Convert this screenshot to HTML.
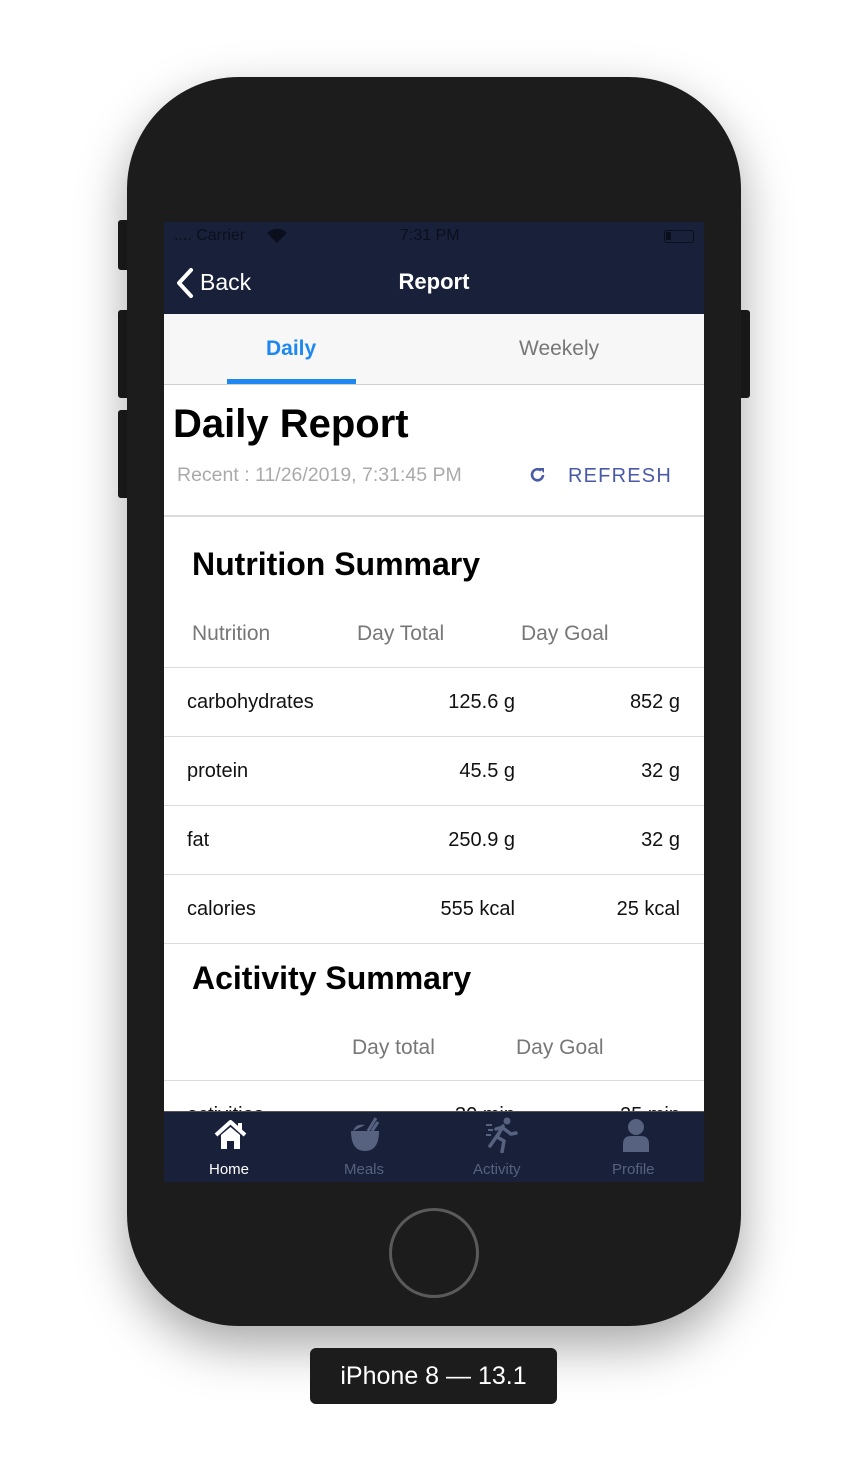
<!DOCTYPE html>
<html><head><meta charset="utf-8"><style>
*{margin:0;padding:0;box-sizing:border-box}
body{width:868px;height:1476px;background:#fff;position:relative;font-family:"Liberation Sans",sans-serif;overflow:hidden}
.a{position:absolute;white-space:nowrap}
.phone{position:absolute;left:127px;top:77px;width:614px;height:1249px;background:#1c1c1c;border-radius:112px;box-shadow:0 20px 50px rgba(0,0,0,.35)}
.btn{position:absolute;background:#1c1c1c;border-radius:3px}
.screen{position:absolute;left:164px;top:222px;width:540px;height:960px;background:#fff;overflow:hidden}
.line{position:absolute;left:0;width:540px;height:1px;background:#dcdcdc}
.row{font-size:20px;color:#111}
.hdr{font-size:21px;color:#777}
.lbl{font-size:15px;color:#56627f}
</style></head><body>
<div class="btn" style="left:118px;top:220px;width:12px;height:50px"></div>
<div class="btn" style="left:118px;top:310px;width:12px;height:88px"></div>
<div class="btn" style="left:118px;top:410px;width:12px;height:88px"></div>
<div class="btn" style="left:738px;top:310px;width:12px;height:88px"></div>
<div class="phone"></div>
<div class="a" style="left:389px;top:1208px;width:90px;height:90px;border-radius:50%;border:3px solid #5a5a5a"></div>
<div class="a" style="left:310px;top:1348px;width:247px;height:56px;background:#1c1c1c;border-radius:6px;color:#fff;font-size:25px;text-align:center;line-height:56px">iPhone 8 — 13.1</div>
<div class="screen">
 <div class="a" style="left:0;top:0;width:540px;height:92px;background:#19203a"></div>
 <div class="a" style="left:10px;top:5px;font-size:16px;color:#0b0f1d">.... Carrier</div>
 <svg class="a" style="left:102px;top:6px" width="22" height="16" viewBox="0 0 22 16"><path d="M11 15 L1 5 A14 14 0 0 1 21 5 Z" fill="#0b0f1d"/></svg>
 <div class="a" style="left:236px;top:5px;font-size:16px;color:#0b0f1d">7:31 PM</div>
 <div class="a" style="left:500px;top:8px;width:30px;height:13px;border:1.5px solid #0b0f1d;border-radius:3px"><div style="width:5px;height:8px;margin:1px;background:#0b0f1d"></div></div>
 <svg class="a" style="left:11px;top:45px" width="20" height="32" viewBox="0 0 20 32"><path d="M16 3 L4 16 L16 29" stroke="#fff" stroke-width="4" fill="none" stroke-linecap="round" stroke-linejoin="round"/></svg>
 <div class="a" style="left:36px;top:47px;font-size:23px;color:#fff">Back</div>
 <div class="a" style="left:0;width:540px;text-align:center;top:47px;font-size:22px;color:#fff;font-weight:bold">Report</div>
 <div class="a" style="left:0;top:92px;width:540px;height:71px;background:#f7f7f7;border-bottom:1px solid #cfcfcf"></div>
 <div class="a" style="left:102px;top:115px;font-size:21px;color:#1e88f0;font-weight:bold">Daily</div>
 <div class="a" style="left:355px;top:115px;font-size:21px;color:#777">Weekely</div>
 <div class="a" style="left:63px;top:157px;width:129px;height:5px;background:#1e88f0"></div>
 <div class="a" style="left:9px;top:180px;font-size:40px;font-weight:bold;color:#000">Daily Report</div>
 <div class="a" style="left:13px;top:242px;font-size:19.5px;color:#aaa">Recent : 11/26/2019, 7:31:45 PM</div>
 <svg class="a" style="left:365px;top:244px" width="18" height="18" viewBox="0 0 18 18"><path d="M14 9 A5.5 5.5 0 1 1 12 4.5" stroke="#4a5aa8" stroke-width="2.6" fill="none"/><path d="M10 2 L15 2 L15 7 Z" fill="#4a5aa8"/></svg>
 <div class="a" style="left:404px;top:243px;font-size:20px;color:#4a5aa8;letter-spacing:1.2px">REFRESH</div>
 <div class="line" style="top:293px;height:2px"></div>
 <div class="a" style="left:28px;top:324px;font-size:32px;font-weight:bold;color:#000">Nutrition Summary</div>
 <div class="a hdr" style="left:28px;top:400px">Nutrition</div>
 <div class="a hdr" style="left:193px;top:400px">Day Total</div>
 <div class="a hdr" style="left:357px;top:400px">Day Goal</div>
 <div class="line" style="top:445px"></div>
 <div class="a row" style="left:23px;top:469px">carbohydrates</div><div class="a row" style="right:189px;top:469px">125.6 g</div><div class="a row" style="right:24px;top:469px">852 g</div>
 <div class="line" style="top:514px"></div>
 <div class="a row" style="left:23px;top:538px">protein</div><div class="a row" style="right:189px;top:538px">45.5 g</div><div class="a row" style="right:24px;top:538px">32 g</div>
 <div class="line" style="top:583px"></div>
 <div class="a row" style="left:23px;top:607px">fat</div><div class="a row" style="right:189px;top:607px">250.9 g</div><div class="a row" style="right:24px;top:607px">32 g</div>
 <div class="line" style="top:652px"></div>
 <div class="a row" style="left:23px;top:676px">calories</div><div class="a row" style="right:189px;top:676px">555 kcal</div><div class="a row" style="right:24px;top:676px">25 kcal</div>
 <div class="line" style="top:721px"></div>
 <div class="a" style="left:28px;top:738px;font-size:32px;font-weight:bold;color:#000">Acitivity Summary</div>
 <div class="a hdr" style="left:188px;top:814px">Day total</div>
 <div class="a hdr" style="left:352px;top:814px">Day Goal</div>
 <div class="line" style="top:858px"></div>
 <div class="a row" style="left:23px;top:882px">activities</div><div class="a row" style="right:189px;top:882px">30 min</div><div class="a row" style="right:24px;top:882px">25 min</div>
 <div class="a" style="left:0;top:889px;width:540px;height:71px;background:#19203a;border-top:1px solid #555"></div>
 <svg class="a" style="left:50px;top:898px" width="33" height="30" viewBox="0 0 33 30"><path d="M2 15 L16.5 2 L31 15" stroke="#fff" stroke-width="4" fill="none" stroke-linejoin="round"/><rect x="24" y="3" width="4" height="8" fill="#fff"/><path d="M7 15 L16.5 7 L26 15 L26 29 L20 29 L20 21 L13 21 L13 29 L7 29 Z" fill="#fff"/></svg>
 <svg class="a" style="left:186px;top:893px" width="30" height="38" viewBox="0 0 30 38"><path d="M1 16 L29 16 Q29 36 15 36 Q1 36 1 16 Z" fill="#56627f"/><path d="M3 16 Q6 8 15 10" fill="#56627f"/><path d="M18 16 L26 3 M22 16 L28 7" stroke="#56627f" stroke-width="3"/></svg>
 <svg class="a" style="left:322px;top:895px" width="32" height="36" viewBox="0 0 32 36"><circle cx="21" cy="4" r="3.5" fill="#56627f"/><path d="M17 9 L11 20 L18 24 L16 35 M13 16 L4 29 M17 11 L25 17 L30 16 M17 10 L10 12" stroke="#56627f" stroke-width="3.5" fill="none" stroke-linecap="round"/><path d="M0 8 H6 M2 13 H7 M0 18 H5" stroke="#56627f" stroke-width="2"/></svg>
 <svg class="a" style="left:458px;top:896px" width="28" height="34" viewBox="0 0 28 34"><circle cx="14" cy="9" r="8" fill="#56627f"/><path d="M1 34 L1 26 Q1 18 9 18 L19 18 Q27 18 27 26 L27 34 Z" fill="#56627f"/></svg>
 <div class="a" style="left:45px;top:939px;font-size:15px;color:#fff">Home</div>
 <div class="a lbl" style="left:180px;top:939px">Meals</div>
 <div class="a lbl" style="left:309px;top:939px">Activity</div>
 <div class="a lbl" style="left:448px;top:939px">Profile</div>
</div>
</body></html>
